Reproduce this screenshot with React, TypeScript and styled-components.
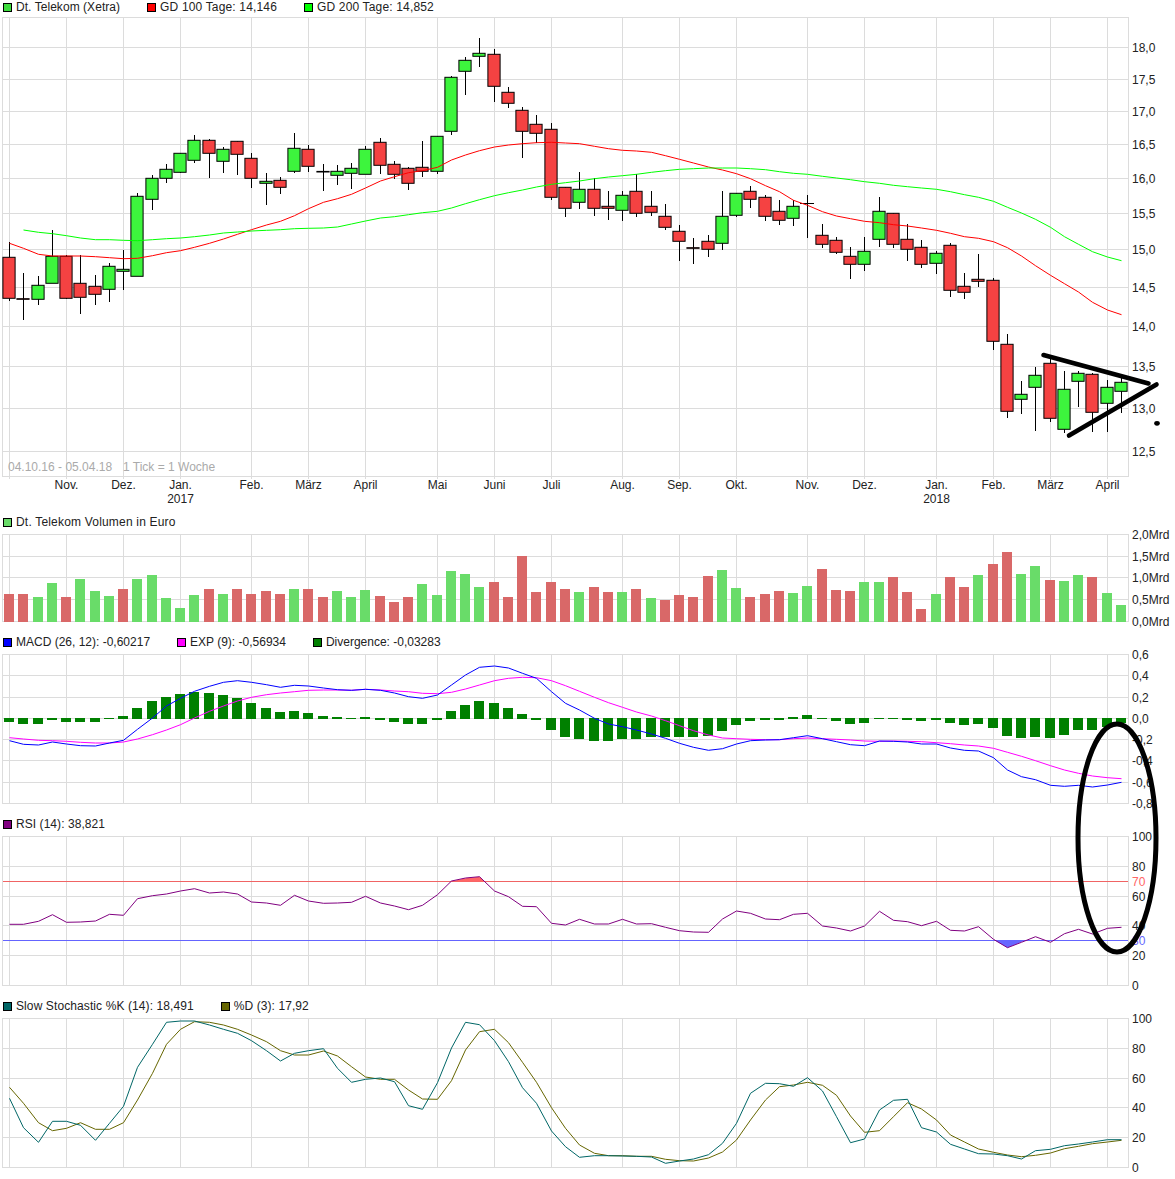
import React from 'react';
import styled, { createGlobalStyle } from 'styled-components';

type Candle = [number, number, number, number, number];

interface LegendEntry {
  color: string;
  text: string;
  spacing?: number;
}

interface AxisLabel {
  y: number;
  text: string;
  color?: string;
}

interface ChartProps {
  top: number;
  bottom: number;
  rows: number[];
  labels: AxisLabel[];
  tick?: number;
  children: React.ReactNode;
}

const GlobalStyle = createGlobalStyle`
  html, body {
    margin: 0;
    padding: 0;
    background: #fff;
  }
`;

const Page = styled.div`
  position: relative;
  width: 1175px;
  height: 1179px;
  overflow: hidden;
  background: #fff;
  font-family: 'Liberation Sans', Arial, sans-serif;
  font-size: 12px;
  color: #222;
`;

const LegendRow = styled.div<{ $top: number; $bottom: number }>`
  display: flex;
  align-items: center;
  gap: 27px;
  height: 12px;
  padding: ${(props) => props.$top}px 0 ${(props) => props.$bottom}px 3px;
  line-height: 12px;
  white-space: nowrap;
`;

const LegendItem = styled.div<{ $spacing: number }>`
  display: flex;
  align-items: center;
  gap: 4px;
  letter-spacing: ${(props) => props.$spacing}px;
`;

const Swatch = styled.span<{ $color: string }>`
  box-sizing: border-box;
  display: block;
  width: 9px;
  height: 9px;
  border: 1px solid #000;
  background: ${(props) => props.$color};
`;

const ChartSvg = styled.svg`
  display: block;
  overflow: visible;
`;

const GridLine = styled.line`
  stroke: #dcdcdc;
  stroke-width: 1;
  shape-rendering: crispEdges;
`;

const LevelLine = styled.line<{ $color: string }>`
  stroke: ${(props) => props.$color};
  stroke-width: 1;
  shape-rendering: crispEdges;
`;

const AxisText = styled.text<{ $color?: string }>`
  font-family: 'Liberation Sans', Arial, sans-serif;
  font-size: 12px;
  fill: ${(props) => props.$color || '#222'};
  dominant-baseline: central;
`;

const RangeText = styled.text`
  font-family: 'Liberation Sans', Arial, sans-serif;
  font-size: 12px;
  fill: #aaa;
`;

const Wick = styled.line`
  stroke: #000;
  stroke-width: 1;
  shape-rendering: crispEdges;
`;

const Body = styled.rect<{ $up: boolean }>`
  fill: ${(props) => (props.$up ? '#3df53d' : '#f54242')};
  stroke: #000;
  stroke-width: 1;
`;

const VolumeBar = styled.rect<{ $up: boolean }>`
  fill: ${(props) => (props.$up ? '#69dc69' : '#d96868')};
`;

const DivergenceBar = styled.rect`
  fill: #008000;
`;

const Curve = styled.polyline<{ $color: string }>`
  fill: none;
  stroke: ${(props) => props.$color};
  stroke-width: 1;
  stroke-linejoin: round;
`;

const Annotation = styled.svg`
  position: absolute;
  top: 0;
  left: 0;
  pointer-events: none;
`;

const Marker = styled.line`
  stroke: #000;
  stroke-width: 4.6;
  stroke-linecap: round;
`;

// x pixel of each weekly tick, the chart rounds them unevenly
const X = [
  9, 23, 38, 52, 66, 80, 95, 109, 123, 137, 152, 166, 180, 194, 209, 223, 237, 251, 266, 280,
  294, 308, 323, 337, 351, 365, 380, 394, 408, 422, 437, 451, 465, 479, 494, 508, 522, 536, 551, 565,
  579, 594, 608, 622, 636, 651, 665, 679, 693, 708, 722, 736, 750, 765, 779, 793, 807, 822, 836, 850,
  864, 879, 893, 907, 921, 936, 950, 964, 978, 993, 1007, 1021, 1035, 1050, 1064, 1078, 1092, 1107, 1121,
];

const MONTH_TICKS = [4, 8, 12, 17, 21, 25, 30, 34, 38, 43, 47, 51, 56, 60, 65, 69, 73, 77];

const MONTHS: { tick: number; text: string; year?: string }[] = [
  { tick: 4, text: 'Nov.' },
  { tick: 8, text: 'Dez.' },
  { tick: 12, text: 'Jan.', year: '2017' },
  { tick: 17, text: 'Feb.' },
  { tick: 21, text: 'März' },
  { tick: 25, text: 'April' },
  { tick: 30, text: 'Mai' },
  { tick: 34, text: 'Juni' },
  { tick: 38, text: 'Juli' },
  { tick: 43, text: 'Aug.' },
  { tick: 47, text: 'Sep.' },
  { tick: 51, text: 'Okt.' },
  { tick: 56, text: 'Nov.' },
  { tick: 60, text: 'Dez.' },
  { tick: 65, text: 'Jan.', year: '2018' },
  { tick: 69, text: 'Feb.' },
  { tick: 73, text: 'März' },
  { tick: 77, text: 'April' },
];

// high, body top, body bottom, low, rising
const CANDLES: Candle[] = [
  [242.3, 257.3, 298.3, 300.7, 0], [273, 298.7, 299.3, 319.5, 0], [276, 285.3, 299.3, 304.7, 1], [230, 256.3, 283.3, 283.3, 1],
  [255, 256.3, 298.3, 299.3, 0], [255.3, 283.3, 297.3, 313.7, 0], [275, 286.3, 294.3, 304.7, 0], [263.3, 266.3, 289.3, 301.7, 1],
  [250, 269.3, 271.3, 289.7, 1], [193.3, 196.3, 276.3, 276.3, 1], [175.3, 178.3, 199.3, 209.7, 1], [164, 169.3, 178.3, 182.7, 1],
  [153.3, 153.3, 172.3, 173.3, 1], [135, 140.3, 160.3, 162.7, 1], [139.3, 140.3, 153.3, 177.7, 0], [147, 149.3, 161.3, 172.7, 1],
  [141.3, 141.3, 154.3, 174.7, 0], [153.3, 158.3, 178.3, 187.7, 0], [173, 181.3, 183.3, 204.7, 1], [177.3, 180.3, 187.3, 193.7, 0],
  [133, 148.3, 171.3, 172.7, 1], [145.3, 149.3, 166.3, 171.7, 0], [164, 171.4, 172, 190.7, 0], [165, 171.3, 175.3, 184.7, 1],
  [163.3, 168.3, 173.3, 188.7, 1], [146, 149.3, 174.3, 174.3, 1], [138.3, 142.3, 165.3, 173.7, 0], [161.3, 164.3, 174.3, 178.7, 0],
  [167, 168.3, 183.3, 189.7, 0], [141, 167.3, 171.3, 176.7, 0], [136, 136.3, 171.3, 173.7, 1], [76.3, 77.3, 131.3, 134.7, 1],
  [57.3, 60.3, 71.3, 94.7, 1], [38, 53.3, 56.3, 66.7, 1], [49, 54.3, 86.3, 101.7, 0], [87.3, 92.3, 103.3, 107.7, 0],
  [107.3, 110.3, 131.3, 157.7, 0], [115, 124.3, 133.3, 143, 0], [123, 129.3, 197.3, 199.7, 0], [187.3, 187.3, 208.3, 216.7, 0],
  [172.3, 189.3, 202.3, 208.7, 1], [178.3, 189.3, 208.3, 215.7, 0], [191.3, 206.3, 208.3, 219.7, 0], [191.3, 195.3, 210.3, 220.7, 1],
  [174.3, 191.3, 213.3, 216.7, 0], [191.3, 206.3, 212.3, 215.7, 0], [204.3, 216.3, 227.3, 229.7, 0], [225.3, 231.3, 241.3, 260.7, 0],
  [238.3, 247.7, 248.3, 263.7, 0], [235.3, 241.3, 249.3, 256.7, 0], [191.3, 216.3, 243.3, 249.7, 1], [193.3, 193.3, 215.3, 216.7, 1],
  [186.3, 191.3, 199.3, 207.7, 0], [195.3, 197.3, 216.3, 220.7, 0], [200.3, 211.3, 220.3, 224.7, 0], [200.3, 206.3, 218.3, 225.7, 1],
  [195, 203.5, 203.5, 238, -1], [224, 235.3, 244.3, 248, 0], [237.3, 240.3, 252.3, 253.7, 0], [247.3, 256.3, 264.3, 278.7, 0],
  [237.3, 251.3, 264.3, 270.7, 1], [197, 211.3, 239.3, 246.7, 1], [213.3, 213.3, 244.3, 248, 0], [224.3, 239.3, 249.3, 260.7, 0],
  [240.3, 247.3, 264.3, 267.7, 0], [251.3, 253.3, 263.3, 273.7, 1], [243.3, 245.3, 290.3, 296.7, 0], [273.3, 286.3, 292.3, 298.7, 0],
  [254.3, 279.3, 281.3, 286.7, 0], [278.3, 280.3, 341.3, 350, 0], [334, 344.3, 411.3, 417.7, 0], [381, 394.3, 399.3, 413.7, 1],
  [367.3, 375.3, 387.3, 430.7, 1], [358, 363.3, 418.3, 422.3, 0], [371.3, 389.3, 429.3, 432.7, 1], [371.3, 373.3, 381.3, 406.7, 1],
  [373.3, 374.3, 412.3, 431.7, 0], [380, 387.3, 403.3, 431.7, 1], [378.3, 382.3, 391.3, 412.7, 1],
];

const VOLUME_TOPS = [
  594, 594, 597, 583, 597, 579, 591, 596, 589, 579, 575, 598, 608, 595, 589, 594, 589, 594, 591, 594, 589, 589, 597, 591, 597, 590, 596, 602,
  597, 584, 595, 571, 574, 587, 582, 597, 556, 592, 582, 589, 592, 587, 592, 592, 589, 598, 600, 595, 597, 576, 570, 588, 597, 594, 591, 593,
  586, 569, 590, 591, 582, 582, 577, 592, 609, 594, 577, 587, 575, 564, 552, 574, 566, 580, 581, 575, 577, 593, 605,
];
const VOLUME_COLORS = 'rrggrgggrgggggrgrrrrgrrgggrr' + 'rgggggrrrrrrgrrgrgrrrrggrrrg' + 'grrrggrrrgrrgrrggrggrgg';

const DIVERGENCE = [
  722, 724, 724, 720, 722, 722, 722, 719, 716, 708, 701, 697, 694, 692, 693, 695, 698, 703, 708, 712, 711, 713, 716, 717, 718, 717, 720, 722,
  724, 724, 720, 711, 705, 701, 703, 708, 714, 720, 730, 737, 739, 741, 741, 739, 739, 737, 737, 737, 737, 736, 731, 725, 721, 720, 720, 717,
  715, 719, 721, 724, 723, 719, 719, 720, 721, 720, 723, 725, 724, 728, 736, 738, 737, 738, 735, 730, 730, 727, 723,
];

// curve values were read off at 3x, so a third of a pixel each
const thirds = (offset: number, values: number[]) => values.map((v) => offset + v / 3);

const GD100 = [
  ...thirds(0, [730, 745, 763, 768, 768, 768, 770, 773, 776, 775, 767, 758, 752, 742, 730, 717, 703, 689, 675, 664, 647, 626, 607, 596, 583, 564, 543, 530]),
  ...thirds(20, [458, 452, 442, 420, 405, 392, 381, 375, 371, 368, 367, 369, 371, 379, 386, 391, 393, 397, 407, 418, 429, 441, 450, 461, 476, 497, 515, 541]),
  ...thirds(170, [106, 125, 138, 146, 154, 158, 164, 168, 174, 181, 190, 200, 205, 215, 233, 258, 287, 316, 341, 366, 397, 420, 434]),
];

// starts one week later than the other curves
const GD200 = [
  ...thirds(0, [690, 697, 701, 707, 714, 719, 719, 721, 722, 719, 716, 714, 710, 705, 699, 696, 693, 691, 689, 686, 685, 684, 681, 672, 663, 654, 650]),
  ...thirds(20, [584, 578, 574, 564, 551, 539, 527, 518, 510, 501, 493, 488, 483, 476, 471, 467, 463, 457, 452, 448, 446, 444, 444, 444, 446, 449, 455, 460]),
  ...thirds(170, [13, 19, 24, 29, 35, 40, 46, 50, 54, 58, 65, 74, 82, 94, 112, 129, 148, 172, 200, 223, 245, 261, 272]),
];

const MACD = [
  ...thirds(630, [332, 343, 345, 336, 342, 347, 348, 339, 331, 298, 264, 228, 205, 184, 169, 157, 152, 157, 164, 172, 166, 168, 174, 179, 181, 178, 181, 189]),
  ...thirds(510, [560, 565, 555, 525, 495, 472, 468, 474, 490, 505, 545, 580, 600, 625, 642, 650, 660, 672, 685, 700, 712, 721, 716, 702, 692, 690, 689, 683]),
  ...thirds(510, [677, 686, 695, 704, 707, 693, 694, 696, 702, 702, 714, 721, 723, 743, 780, 800, 809, 826, 829, 826, 831, 825, 817]),
];

const EXP = [
  ...thirds(630, [323, 327, 331, 332, 334, 337, 339, 339, 336, 327, 314, 300, 284, 264, 244, 228, 213, 202, 194, 189, 185, 181, 180, 180, 181, 178, 180, 183]),
  ...thirds(510, [545, 550, 551, 547, 537, 525, 512, 505, 502, 503, 512, 527, 544, 562, 578, 592, 606, 618, 632, 647, 662, 675, 684, 686, 688, 689, 689, 686]),
  ...thirds(510, [684, 686, 688, 690, 693, 694, 693, 694, 695, 698, 701, 705, 708, 715, 727, 739, 752, 767, 780, 790, 798, 803, 806]),
];

const RSI = thirds(810, [
  343, 343, 334, 314, 337, 336, 333, 313, 316, 266, 257, 252, 243, 236, 249, 246, 252, 276, 279, 286, 256, 273, 280, 279, 277, 259, 279, 288,
  299, 286, 254, 213, 204, 200, 243, 260, 289, 290, 340, 345, 328, 342, 342, 328, 342, 341, 352, 362, 366, 367, 327, 303, 310, 327, 329, 313,
  310, 348, 354, 363, 348, 304, 331, 335, 347, 334, 361, 363, 350, 388, 413, 397, 380, 397, 371, 358, 372, 355, 352,
]);

const STOCH_K = thirds(810, [
  865, 953, 997, 934, 934, 946, 991, 940, 889, 772, 703, 637, 633, 633, 645, 658, 670, 692, 722, 753, 730, 722, 716, 775, 817, 808, 804, 815,
  887, 898, 818, 714, 637, 644, 692, 755, 833, 880, 963, 1010, 1042, 1037, 1037, 1038, 1039, 1041, 1060, 1053, 1047, 1034, 1000, 940, 850, 820, 821, 829,
  803, 843, 920, 998, 987, 900, 871, 868, 953, 966, 1003, 1017, 1031, 1032, 1037, 1047, 1022, 1018, 1007, 1002, 996, 989, 989,
]);

const STOCH_D = thirds(810, [
  832, 880, 938, 962, 955, 938, 958, 958, 938, 870, 790, 703, 658, 635, 637, 645, 658, 675, 695, 722, 735, 735, 723, 738, 770, 801, 808, 808,
  840, 867, 868, 812, 720, 665, 658, 698, 757, 817, 893, 955, 1005, 1030, 1037, 1037, 1039, 1039, 1048, 1052, 1053, 1044, 1026, 990, 930, 870, 830, 825,
  817, 826, 856, 918, 967, 962, 920, 878, 897, 930, 975, 996, 1017, 1027, 1035, 1040, 1036, 1029, 1016, 1009, 1001, 996, 991,
]);

const points = (values: number[], from = 0) =>
  values.map((y, i) => `${X[i + from] + 0.5},${y.toFixed(1)}`).join(' ');

const PRICE_LABELS: AxisLabel[] = [
  { y: 47.5, text: '18,0' }, { y: 79.5, text: '17,5' }, { y: 111.5, text: '17,0' }, { y: 144.5, text: '16,5' },
  { y: 178.5, text: '16,0' }, { y: 213.5, text: '15,5' }, { y: 249.5, text: '15,0' }, { y: 287.5, text: '14,5' },
  { y: 326.5, text: '14,0' }, { y: 366.5, text: '13,5' }, { y: 408.5, text: '13,0' }, { y: 451.5, text: '12,5' },
];

const VOLUME_LABELS: AxisLabel[] = [
  { y: 534.5, text: '2,0Mrd' }, { y: 556.5, text: '1,5Mrd' }, { y: 577.5, text: '1,0Mrd' }, { y: 599.5, text: '0,5Mrd' }, { y: 621.5, text: '0,0Mrd' },
];

const MACD_LABELS: AxisLabel[] = [
  { y: 654.5, text: '0,6' }, { y: 675.5, text: '0,4' }, { y: 697.5, text: '0,2' }, { y: 718.5, text: '0,0' },
  { y: 739.5, text: '-0,2' }, { y: 760.5, text: '-0,4' }, { y: 782.5, text: '-0,6' }, { y: 803.5, text: '-0,8' },
];

const RSI_LABELS: AxisLabel[] = [
  { y: 836.5, text: '100' }, { y: 866.5, text: '80' }, { y: 881.5, text: '70', color: '#ff6666' }, { y: 896.5, text: '60' },
  { y: 925.5, text: '40' }, { y: 940.5, text: '30', color: '#6666ff' }, { y: 955.5, text: '20' }, { y: 985.5, text: '0' },
];

const STOCH_LABELS: AxisLabel[] = [
  { y: 1018.5, text: '100' }, { y: 1048.5, text: '80' }, { y: 1078.5, text: '60' }, { y: 1107.5, text: '40' }, { y: 1137.5, text: '20' }, { y: 1167.5, text: '0' },
];

function Legend({ items, top, bottom }: { items: LegendEntry[]; top: number; bottom: number }) {
  return (
    <LegendRow $top={top} $bottom={bottom}>
      {items.map((item) => (
        <LegendItem key={item.text} $spacing={item.spacing || 0}>
          <Swatch $color={item.color} />
          <span>{item.text}</span>
        </LegendItem>
      ))}
    </LegendRow>
  );
}

function Chart({ top, bottom, rows, labels, tick = 0, children }: ChartProps) {
  const gridTop = top + 0.5;
  const gridBottom = rows[rows.length - 1];
  return (
    <ChartSvg width={1175} height={bottom - top} viewBox={`0 ${top} 1175 ${bottom - top}`}>
      {rows.map((y) => (
        <GridLine key={y} x1={2} x2={1129} y1={y} y2={y} />
      ))}
      <GridLine x1={2.5} x2={2.5} y1={gridTop} y2={gridBottom} />
      <GridLine x1={1128.5} x2={1128.5} y1={gridTop} y2={gridBottom} />
      {MONTH_TICKS.map((t) => (
        <GridLine key={t} x1={X[t] + 0.5} x2={X[t] + 0.5} y1={gridTop} y2={gridBottom + tick} />
      ))}
      <GridLine x1={9.5} x2={9.5} y1={gridTop} y2={gridBottom + tick} />
      {children}
      {labels.map((label) => (
        <AxisText key={label.text} x={1132} y={label.y} $color={label.color}>
          {label.text}
        </AxisText>
      ))}
    </ChartSvg>
  );
}

function App() {
  return (
    <Page>
      <GlobalStyle />
      <Legend
        top={1}
        bottom={4}
        items={[
          { color: '#3ddc3d', text: 'Dt. Telekom (Xetra)', spacing: 0.05 },
          { color: '#ff0000', text: 'GD 100 Tage: 14,146', spacing: 0.16 },
          { color: '#00ff00', text: 'GD 200 Tage: 14,852', spacing: 0.16 },
        ]}
      />
      <Chart
        top={17}
        bottom={508}
        tick={2}
        rows={[17.5, 47.5, 79.5, 111.5, 144.5, 178.5, 213.5, 249.5, 287.5, 326.5, 366.5, 408.5, 451.5, 476.5]}
        labels={PRICE_LABELS}
      >
        {CANDLES.map(([high, , , low], i) => (
          <Wick key={i} x1={X[i] + 0.5} x2={X[i] + 0.5} y1={high} y2={low} />
        ))}
        {CANDLES.map(([, top, bottom, , kind], i) =>
          kind < 0 ? (
            <Wick key={i} x1={X[i] - 7} x2={X[i] + 7} y1={top} y2={top} />
          ) : (
            <Body key={i} x={X[i] - 6.1} y={top} width={12.2} height={bottom - top} $up={kind === 1} />
          ),
        )}
        <Curve points={points(GD100)} $color="#ff0000" />
        <Curve points={points(GD200, 1)} $color="#00ff00" />
        <RangeText x={8} y={470.5}>04.10.16 - 05.04.18</RangeText>
        <RangeText x={123} y={470.5}>1 Tick = 1 Woche</RangeText>
        {MONTHS.map((month) => (
          <React.Fragment key={month.tick}>
            <AxisText x={X[month.tick] + 0.5} y={484.5} textAnchor="middle">{month.text}</AxisText>
            {month.year && (
              <AxisText x={X[month.tick] + 0.5} y={498.5} textAnchor="middle">{month.year}</AxisText>
            )}
          </React.Fragment>
        ))}
      </Chart>

      <Legend top={8} bottom={6} items={[{ color: '#69dc69', text: 'Dt. Telekom Volumen in Euro', spacing: 0.19 }]} />
      <Chart top={534} bottom={623} rows={[534.5, 556.5, 577.5, 599.5, 621.5]} labels={VOLUME_LABELS}>
        {VOLUME_TOPS.map((y, i) => (
          <VolumeBar key={i} x={X[i] - 5} y={y} width={10} height={622 - y} $up={VOLUME_COLORS[i] === 'g'} />
        ))}
      </Chart>

      <Legend
        top={13}
        bottom={6}
        items={[
          { color: '#0000ff', text: 'MACD (26, 12): -0,60217' },
          { color: '#ff00ff', text: 'EXP (9): -0,56934' },
          { color: '#008000', text: 'Divergence: -0,03283' },
        ]}
      />
      <Chart top={654} bottom={805} rows={[654.5, 675.5, 697.5, 718.5, 739.5, 760.5, 782.5, 803.5]} labels={MACD_LABELS}>
        {DIVERGENCE.map((end, i) => {
          const from = Math.min(end, 718);
          const to = Math.max(end, 719);
          return <DivergenceBar key={i} x={X[i] - 5} y={from} width={10} height={to - from} />;
        })}
        <Curve points={points(EXP)} $color="#ff00ff" />
        <Curve points={points(MACD)} $color="#0000ff" />
      </Chart>

      <Legend top={13} bottom={6} items={[{ color: '#800080', text: 'RSI (14): 38,821', spacing: 0.06 }]} />
      <Chart top={836} bottom={987} rows={[836.5, 866.5, 896.5, 925.5, 955.5, 985.5]} labels={RSI_LABELS}>
        <LevelLine x1={3} x2={1128} y1={881.5} y2={881.5} $color="#f06464" />
        <LevelLine x1={3} x2={1128} y1={940.5} y2={940.5} $color="#6464ff" />
        <polygon points="451,881.5 465.5,878.3 479.5,876.7 484.5,881.5" fill="#ff6666" />
        <polygon points="995,940.5 1007.5,947.7 1025,940.5" fill="#6666ff" />
        <Curve points={points(RSI)} $color="#800080" />
      </Chart>

      <Legend
        top={13}
        bottom={6}
        items={[
          { color: '#006666', text: 'Slow Stochastic %K (14): 18,491', spacing: 0.1 },
          { color: '#666600', text: '%D (3): 17,92', spacing: 0.07 },
        ]}
      />
      <Chart top={1018} bottom={1169} rows={[1018.5, 1048.5, 1078.5, 1107.5, 1137.5, 1167.5]} labels={STOCH_LABELS}>
        <Curve points={points(STOCH_D)} $color="#666600" />
        <Curve points={points(STOCH_K)} $color="#006666" />
      </Chart>

      <Annotation width={1175} height={1179} viewBox="0 0 1175 1179">
        <Marker x1={1043.5} y1={355} x2={1148.5} y2={383.5} />
        <Marker x1={1069} y1={435.5} x2={1156.5} y2={384.5} />
        <ellipse cx={1157} cy={423.3} rx={2.8} ry={2.4} fill="#000" />
        <ellipse cx={1117} cy={838} rx={39} ry={114} fill="none" stroke="#000" strokeWidth={5} />
      </Annotation>
    </Page>
  );
}

export default App;
